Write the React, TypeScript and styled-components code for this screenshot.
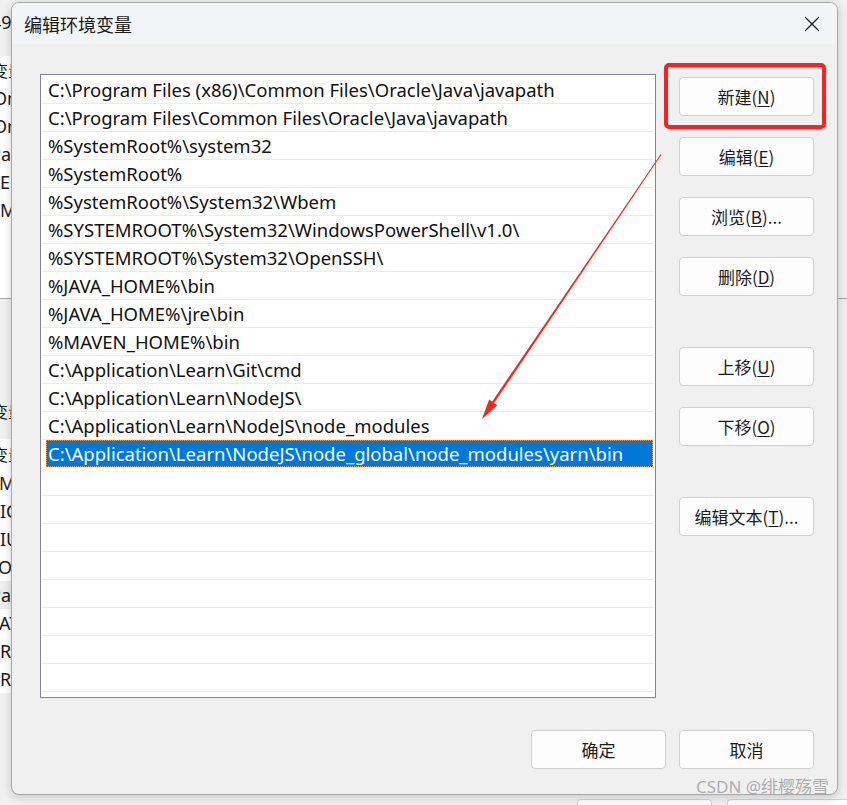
import React from "react";
import styled, { createGlobalStyle } from "styled-components";

const GlobalStyle = createGlobalStyle`
  html, body { margin: 0; padding: 0; }
  body {
    width: 847px;
    height: 805px;
    overflow: hidden;
    background: #f0f0f0;
    font-family: "Noto Sans", "Noto Sans CJK SC", sans-serif;
  }
`;

/* ---------- background window (partly hidden) ---------- */

const BgWindow = styled.div`
  position: relative;
  width: 847px;
  height: 805px;
  overflow: hidden;
  background: #f0f0f0;
  display: flex;
  flex-direction: column;
  font-size: 18px;
  color: #1a1a1a;
`;

const BgTitle = styled.div`
  height: 44px;
  display: flex;
  align-items: center;
  white-space: nowrap;
`;

const BgText = styled.span<{ $shift: number }>`
  margin-left: ${(p) => p.$shift}px;
  white-space: nowrap;
  font-family: "Noto Sans", "Noto Sans CJK SC", sans-serif;
`;

const BgList = styled.div<{ $height: number; $top: number }>`
  margin-top: ${(p) => p.$top}px;
  width: 826px;
  height: ${(p) => p.$height}px;
  background: #ffffff;
  display: flex;
  flex-direction: column;
  overflow: hidden;
`;

const BgHeader = styled.div<{ $h: number }>`
  height: ${(p) => p.$h}px;
  flex: none;
  display: flex;
  align-items: center;
  font-family: "Noto Sans CJK SC", sans-serif;
  font-size: 16px;
`;

const BgRow = styled.div<{ $muted?: boolean }>`
  height: 28px;
  flex: none;
  display: flex;
  align-items: center;
  background: ${(p) => (p.$muted ? "#eeeeee" : "transparent")};
`;

const BgDivider = styled.div`
  height: 1px;
  background: #a5a5a5;
`;

const BgLabel = styled.div`
  margin-top: 100px;
  height: 24px;
  display: flex;
  align-items: center;
  font-family: "Noto Sans CJK SC", sans-serif;
  font-size: 16px;
`;

const BgFooter = styled.div`
  margin-top: auto;
  height: 6px;
  display: flex;
  gap: 15px;
  padding-left: 577px;
  align-items: flex-start;
`;

const BgButton = styled.div`
  flex: none;
  width: 135px;
  height: 36px;
  box-sizing: border-box;
  border: 1px solid #d0d0d0;
  border-radius: 4px;
  background: #fdfdfd;
`;

/* ---------- dialog ---------- */

const Dialog = styled.div`
  position: absolute;
  left: 11px;
  top: 2px;
  width: 827px;
  height: 793px;
  box-sizing: border-box;
  border: 1px solid #a8a8a8;
  border-radius: 8px;
  background: #f0f0f0;
  overflow: hidden;
  box-shadow: 0 2px 10px rgba(0, 0, 0, 0.18);
  display: flex;
  flex-direction: column;
`;

const TitleBar = styled.div`
  height: 41px;
  flex: none;
  display: flex;
  align-items: center;
  justify-content: space-between;
  padding-left: 12px;
  background: #f3f4f8;
`;

const Title = styled.div`
  font-family: "Noto Sans CJK SC", sans-serif;
  font-size: 18px;
  color: #1a1a1a;
`;

const CloseButton = styled.div`
  width: 46px;
  height: 41px;
  margin-right: 2px;
  display: flex;
  align-items: center;
  justify-content: center;
`;

const Body = styled.div`
  flex: 1;
  display: flex;
  flex-direction: column;
  padding: 30px 23px 25px 28px;
  min-height: 0;
`;

const Main = styled.div`
  display: flex;
  gap: 23px;
  height: 624px;
`;

const ListBox = styled.div`
  width: 616px;
  height: 624px;
  box-sizing: border-box;
  border: 1px solid #858593;
  background: #ffffff;
  padding: 1px 1px 0 1px;
  overflow: hidden;
  display: flex;
  flex-direction: column;
`;

const Row = styled.div`
  flex: none;
  height: 28px;
  box-sizing: border-box;
  border-bottom: 1px solid #ebebeb;
  display: flex;
`;

const Item = styled.div<{ $selected?: boolean }>`
  flex: 1;
  margin: 0 1px 0 4px;
  padding-left: 1px;
  box-sizing: border-box;
  display: flex;
  align-items: center;
  white-space: nowrap;
  font-family: "Noto Sans", "Noto Sans CJK SC", sans-serif;
  font-size: 18.5px;
  color: ${(p) => (p.$selected ? "#ffffff" : "#111111")};
  background: ${(p) => (p.$selected ? "#0078d7" : "transparent")};
  border: 1px dotted ${(p) => (p.$selected ? "#f0a040" : "transparent")};
`;

const ButtonColumn = styled.div`
  display: flex;
  flex-direction: column;
  gap: 21px;
  padding-top: 3px;
`;

const Button = styled.div<{ $extraTop?: number }>`
  width: 135px;
  height: 39px;
  box-sizing: border-box;
  margin-top: ${(p) => p.$extraTop ?? 0}px;
  border: 1px solid #d0d0d0;
  border-radius: 4px;
  background: #fdfdfd;
  display: flex;
  align-items: center;
  justify-content: center;
  font-family: "Noto Sans CJK SC", sans-serif;
  font-size: 17px;
  color: #1b1b1b;
  position: relative;
  u {
    text-decoration: underline;
    text-underline-offset: 2px;
    text-decoration-thickness: 1px;
  }
`;

const Footer = styled.div`
  margin-top: auto;
  display: flex;
  justify-content: flex-end;
  gap: 13px;
`;

const RedBox = styled.div`
  position: absolute;
  top: -15px;
  left: -16px;
  right: -13px;
  bottom: -14px;
  border: 4px solid #ff1f1f;
  border-radius: 5px;
  pointer-events: none;
`;

const ArrowLayer = styled.svg`
  position: absolute;
  left: 0;
  top: 0;
  pointer-events: none;
`;

const Watermark = styled.div`
  position: absolute;
  left: 696px;
  top: 775px;
  font-family: "Noto Sans", "Noto Sans CJK SC", sans-serif;
  font-size: 17px;
  line-height: 24px;
  color: rgba(150, 150, 150, 0.75);
  white-space: nowrap;
  pointer-events: none;
`;

const paths = [
  "C:\\Program Files (x86)\\Common Files\\Oracle\\Java\\javapath",
  "C:\\Program Files\\Common Files\\Oracle\\Java\\javapath",
  "%SystemRoot%\\system32",
  "%SystemRoot%",
  "%SystemRoot%\\System32\\Wbem",
  "%SYSTEMROOT%\\System32\\WindowsPowerShell\\v1.0\\",
  "%SYSTEMROOT%\\System32\\OpenSSH\\",
  "%JAVA_HOME%\\bin",
  "%JAVA_HOME%\\jre\\bin",
  "%MAVEN_HOME%\\bin",
  "C:\\Application\\Learn\\Git\\cmd",
  "C:\\Application\\Learn\\NodeJS\\",
  "C:\\Application\\Learn\\NodeJS\\node_modules",
  "C:\\Application\\Learn\\NodeJS\\node_global\\node_modules\\yarn\\bin",
];
const selectedIndex = 13;
const totalRows = 23;

const userVars = [
  { t: "OneDrive", s: -7 },
  { t: "OneDriveConsumer", s: -7 },
  { t: "Path", s: -10 },
  { t: "TEMP", s: -10 },
  { t: "TMP", s: -10 },
];

const sysVars = [
  { t: "MAVEN_HOME", s: -1 },
  { t: "ICU_DATA", s: 0 },
  { t: "IUSER", s: 0 },
  { t: "OS", s: -2 },
  { t: "Path", s: -10, muted: true },
  { t: "ATHEXT", s: -1 },
  { t: "ROCESSOR_ARCHITECTURE", s: 0 },
  { t: "ROCESSOR_LEVEL", s: 0 },
];

const CloseIcon = () => (
  <svg width="16" height="16" viewBox="0 0 16 16">
    <path d="M1 1 L15 15 M15 1 L1 15" stroke="#1a1a1a" strokeWidth="1.2" fill="none" />
  </svg>
);

export default function App() {
  const rows = Array.from({ length: totalRows }, (_, i) => paths[i] ?? "");
  return (
    <>
      <GlobalStyle />
      <BgWindow>
        <BgTitle>
          <BgText $shift={-9}>49</BgText>
        </BgTitle>
        <BgList $top={12} $height={242}>
          <BgHeader $h={28}>
            <BgText $shift={-8}>变量</BgText>
          </BgHeader>
          {userVars.map((v, i) => (
            <BgRow key={i}>
              <BgText $shift={v.s}>{v.t}</BgText>
            </BgRow>
          ))}
        </BgList>
        <BgDivider />
        <BgLabel>
          <BgText $shift={-40}>系统变量(S)</BgText>
        </BgLabel>
        <BgList $top={16} $height={254}>
          <BgHeader $h={30}>
            <BgText $shift={-8}>变量</BgText>
          </BgHeader>
          {sysVars.map((v, i) => (
            <BgRow key={i} $muted={v.muted}>
              <BgText $shift={v.s}>{v.t}</BgText>
            </BgRow>
          ))}
        </BgList>
        <BgFooter>
          <BgButton />
          <BgButton />
        </BgFooter>

        <Dialog>
          <TitleBar>
            <Title>编辑环境变量</Title>
            <CloseButton>
              <CloseIcon />
            </CloseButton>
          </TitleBar>
          <Body>
            <Main>
              <ListBox>
                {rows.map((text, i) => (
                  <Row key={i}>
                    <Item $selected={i === selectedIndex}>{text}</Item>
                  </Row>
                ))}
              </ListBox>
              <ButtonColumn>
                <Button>
                  新建(<u>N</u>)
                  <RedBox />
                </Button>
                <Button>
                  编辑(<u>E</u>)
                </Button>
                <Button>
                  浏览(<u>B</u>)...
                </Button>
                <Button>
                  删除(<u>D</u>)
                </Button>
                <Button $extraTop={30}>
                  上移(<u>U</u>)
                </Button>
                <Button>
                  下移(<u>O</u>)
                </Button>
                <Button $extraTop={30}>
                  编辑文本(<u>T</u>)...
                </Button>
              </ButtonColumn>
            </Main>
            <Footer>
              <Button>确定</Button>
              <Button>取消</Button>
            </Footer>
          </Body>
        </Dialog>

        <ArrowLayer width="847" height="805" viewBox="0 0 847 805">
          <polygon points="660.6,154.2 661.4,154.8 493.9,403.3 491.9,401.9" fill="#f5261c" />
          <polygon points="482,419 489.1,399.6 497.3,405.2" fill="#f5261c" />
        </ArrowLayer>
        <Watermark>CSDN @绯樱殇雪</Watermark>
      </BgWindow>
    </>
  );
}
